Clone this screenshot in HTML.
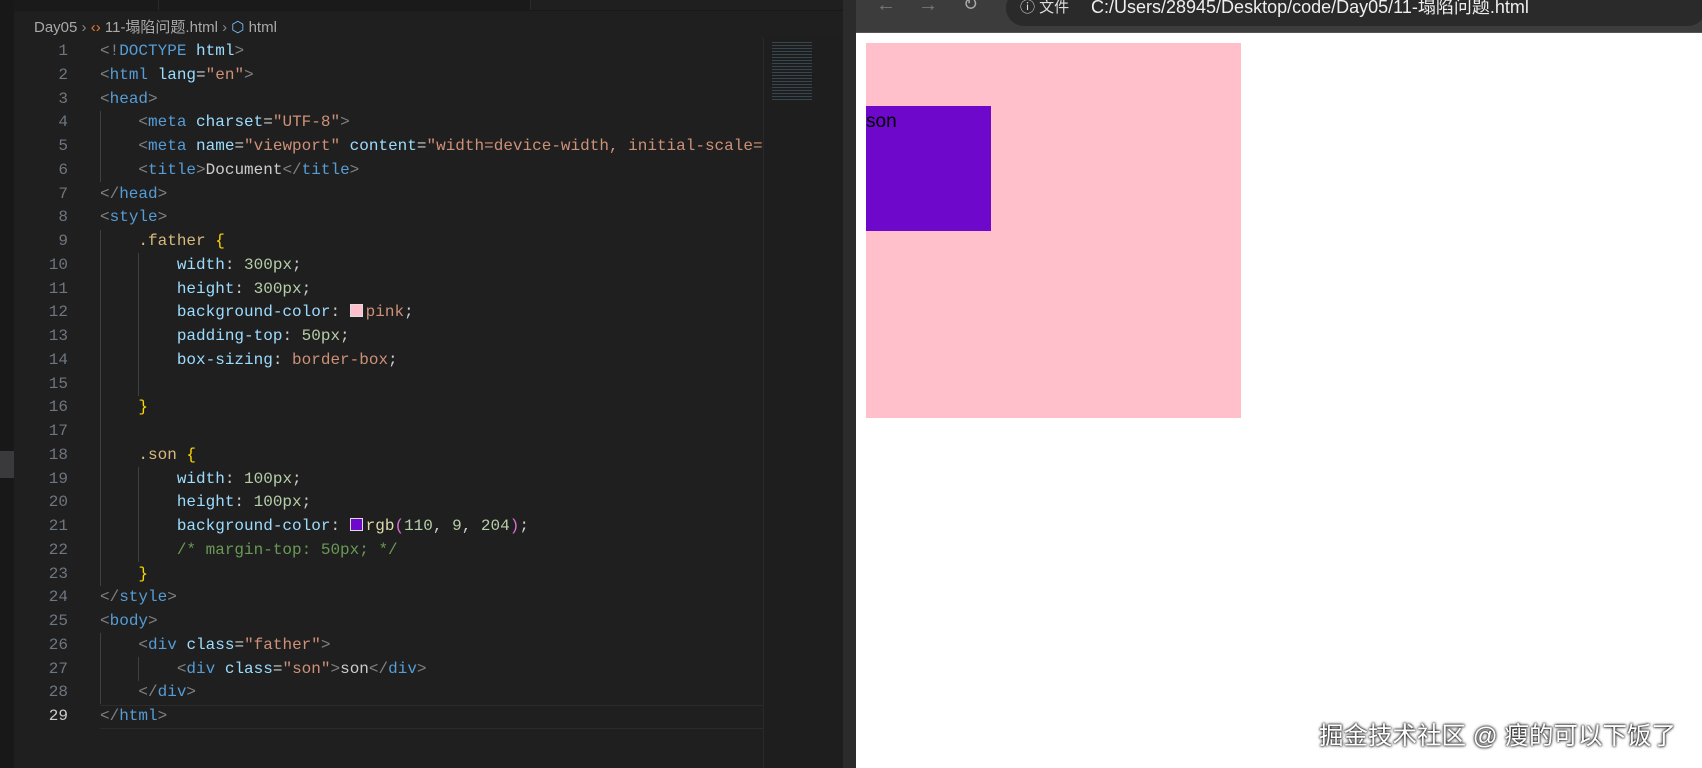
<!DOCTYPE html>
<html><head><meta charset="utf-8"><style>
*{margin:0;padding:0;box-sizing:border-box}
body{width:1702px;height:768px;overflow:hidden;background:#1f1f1f;position:relative;font-family:"Liberation Sans","Noto Sans CJK SC",sans-serif}
.ed{position:absolute;left:0;top:0;width:856px;height:768px;background:#1f1f1f}
.act{position:absolute;left:0;top:0;width:14px;height:768px;background:#181818}
.tabs{position:absolute;left:14px;top:0;width:842px;height:11px;background:#181818}
.tab{position:absolute;top:0;height:10px;background:#1a1a1a;border-right:1px solid #2a2a2a}
.bc{position:absolute;left:34px;top:16px;font-size:15px;color:#a9a9a9;white-space:nowrap}
.code{position:absolute;left:0;top:40px;font-family:"Liberation Mono",monospace;font-size:16px;line-height:23.75px;color:#cccccc;white-space:pre}
.ln{position:absolute;left:20px;width:48px;text-align:right;color:#6e7681}
.cl{position:absolute;left:100px}
.t{color:#808080}.n{color:#569cd6}.a{color:#9cdcfe}.s{color:#ce9178}.sel{color:#d7ba7d}.num{color:#b5cea8}.c{color:#6a9955}.b{color:#ffd700}.f{color:#dcdcaa}.p{color:#da70d6}
.sw{display:inline-block;width:13px;height:13px;border:1px solid #ddd;vertical-align:-1px;margin-right:3px}
.guide{position:absolute;width:1px;background:#404040}
.mini{position:absolute;left:763px;top:38px;width:80px;height:730px;background:#1e1e1e;border-left:1px solid #2a2a2a}
.sb{position:absolute;left:843px;top:0;width:13px;height:768px;background:#2b2b2b}
.br{position:absolute;left:856px;top:0;width:846px;height:768px;background:#fff}
.tb{position:absolute;left:0;top:0;width:846px;height:33px;background:#3c3c3c;border-bottom:1px solid #555}
.url{position:absolute;left:150px;top:-10px;height:36px;width:700px;background:#2a2a2a;border-radius:18px}
.father{position:absolute;left:10px;top:43px;width:375px;height:375px;background:pink}
.son{position:absolute;left:10px;top:106px;width:125px;height:125px;background:rgb(110,9,204);font-size:19px;color:#000;line-height:32px}
.wm{position:absolute;left:1319px;top:717px;font-size:24.5px;color:#fff;text-shadow:0 0 3px #000,0 0 2px #000;white-space:nowrap}
</style></head><body>
<div class="ed">
<div class="act"></div>
<div style="position:absolute;left:0;top:451px;width:14px;height:27px;background:#3a3a3d"></div>
<div class="tabs"><div class="tab" style="left:0;width:145px"></div><div class="tab" style="left:145px;width:372px"></div><div class="tab" style="left:517px;width:460px;background:#1f1f1f"></div></div>
<div class="bc">Day05 <span style="color:#888">›</span> <span style="color:#e37933">‹›</span> 11-塌陷问题.html <span style="color:#888">›</span> <span style="color:#75beff">⬡</span> html</div>
<div class="guide" style="left:100px;top:111px;height:71px"></div>
<div class="guide" style="left:100px;top:230px;height:356px"></div>
<div class="guide" style="left:138px;top:253px;height:143px"></div>
<div class="guide" style="left:138px;top:467px;height:95px"></div>
<div class="guide" style="left:100px;top:633px;height:71px"></div>
<div class="guide" style="left:138px;top:657px;height:24px"></div>
<div style="position:absolute;left:100px;top:705px;width:663px;height:24px;border-top:1px solid #2b2b2b;border-bottom:1px solid #2b2b2b"></div>
<div class="code">
<div class="ln" style="top:0">1</div><div class="cl" style="top:0"><span class="t">&lt;!</span><span class="n">DOCTYPE</span> <span class="a">html</span><span class="t">&gt;</span></div>
<div class="ln" style="top:23.75px">2</div><div class="cl" style="top:23.75px"><span class="t">&lt;</span><span class="n">html</span> <span class="a">lang</span>=<span class="s">"en"</span><span class="t">&gt;</span></div>
<div class="ln" style="top:47.5px">3</div><div class="cl" style="top:47.5px"><span class="t">&lt;</span><span class="n">head</span><span class="t">&gt;</span></div>
<div class="ln" style="top:71.25px">4</div><div class="cl" style="top:71.25px">    <span class="t">&lt;</span><span class="n">meta</span> <span class="a">charset</span>=<span class="s">"UTF-8"</span><span class="t">&gt;</span></div>
<div class="ln" style="top:95px">5</div><div class="cl" style="top:95px">    <span class="t">&lt;</span><span class="n">meta</span> <span class="a">name</span>=<span class="s">"viewport"</span> <span class="a">content</span>=<span class="s">"width=device-width, initial-scale=</span></div>
<div class="ln" style="top:118.75px">6</div><div class="cl" style="top:118.75px">    <span class="t">&lt;</span><span class="n">title</span><span class="t">&gt;</span>Document<span class="t">&lt;/</span><span class="n">title</span><span class="t">&gt;</span></div>
<div class="ln" style="top:142.5px">7</div><div class="cl" style="top:142.5px"><span class="t">&lt;/</span><span class="n">head</span><span class="t">&gt;</span></div>
<div class="ln" style="top:166.25px">8</div><div class="cl" style="top:166.25px"><span class="t">&lt;</span><span class="n">style</span><span class="t">&gt;</span></div>
<div class="ln" style="top:190px">9</div><div class="cl" style="top:190px">    <span class="sel">.father</span> <span class="b">{</span></div>
<div class="ln" style="top:213.75px">10</div><div class="cl" style="top:213.75px">        <span class="a">width</span>: <span class="num">300px</span>;</div>
<div class="ln" style="top:237.5px">11</div><div class="cl" style="top:237.5px">        <span class="a">height</span>: <span class="num">300px</span>;</div>
<div class="ln" style="top:261.25px">12</div><div class="cl" style="top:261.25px">        <span class="a">background-color</span>: <span class="sw" style="background:pink"></span><span class="s">pink</span>;</div>
<div class="ln" style="top:285px">13</div><div class="cl" style="top:285px">        <span class="a">padding-top</span>: <span class="num">50px</span>;</div>
<div class="ln" style="top:308.75px">14</div><div class="cl" style="top:308.75px">        <span class="a">box-sizing</span>: <span class="s">border-box</span>;</div>
<div class="ln" style="top:332.5px">15</div>
<div class="ln" style="top:356.25px">16</div><div class="cl" style="top:356.25px">    <span class="b">}</span></div>
<div class="ln" style="top:380px">17</div>
<div class="ln" style="top:403.75px">18</div><div class="cl" style="top:403.75px">    <span class="sel">.son</span> <span class="b">{</span></div>
<div class="ln" style="top:427.5px">19</div><div class="cl" style="top:427.5px">        <span class="a">width</span>: <span class="num">100px</span>;</div>
<div class="ln" style="top:451.25px">20</div><div class="cl" style="top:451.25px">        <span class="a">height</span>: <span class="num">100px</span>;</div>
<div class="ln" style="top:475px">21</div><div class="cl" style="top:475px">        <span class="a">background-color</span>: <span class="sw" style="background:rgb(110,9,204)"></span><span class="f">rgb</span><span class="p">(</span><span class="num">110</span>, <span class="num">9</span>, <span class="num">204</span><span class="p">)</span>;</div>
<div class="ln" style="top:498.75px">22</div><div class="cl" style="top:498.75px">        <span class="c">/* margin-top: 50px; */</span></div>
<div class="ln" style="top:522.5px">23</div><div class="cl" style="top:522.5px">    <span class="b">}</span></div>
<div class="ln" style="top:546.25px">24</div><div class="cl" style="top:546.25px"><span class="t">&lt;/</span><span class="n">style</span><span class="t">&gt;</span></div>
<div class="ln" style="top:570px">25</div><div class="cl" style="top:570px"><span class="t">&lt;</span><span class="n">body</span><span class="t">&gt;</span></div>
<div class="ln" style="top:593.75px">26</div><div class="cl" style="top:593.75px">    <span class="t">&lt;</span><span class="n">div</span> <span class="a">class</span>=<span class="s">"father"</span><span class="t">&gt;</span></div>
<div class="ln" style="top:617.5px">27</div><div class="cl" style="top:617.5px">        <span class="t">&lt;</span><span class="n">div</span> <span class="a">class</span>=<span class="s">"son"</span><span class="t">&gt;</span>son<span class="t">&lt;/</span><span class="n">div</span><span class="t">&gt;</span></div>
<div class="ln" style="top:641.25px">28</div><div class="cl" style="top:641.25px">    <span class="t">&lt;/</span><span class="n">div</span><span class="t">&gt;</span></div>
<div class="ln" style="top:665px;color:#ccc">29</div><div class="cl" style="top:665px"><span class="t">&lt;/</span><span class="n">html</span><span class="t">&gt;</span></div>
</div>
<div class="mini"><div style="margin:4px 8px;width:40px;height:60px;background:repeating-linear-gradient(#4a6070 0 1px,transparent 1px 3px);opacity:.6"></div></div>
<div class="sb"></div>
</div>
<div class="br">
<div class="tb"><div class="url"></div>
<span style="position:absolute;left:20px;top:-6px;color:#777;font-size:20px">←</span>
<span style="position:absolute;left:62px;top:-6px;color:#777;font-size:20px">→</span>
<span style="position:absolute;left:107px;top:-6px;color:#aaa;font-size:18px">↻</span>
<span style="position:absolute;left:164px;top:-4px;color:#ddd;font-size:15px">ⓘ 文件</span>
<span style="position:absolute;left:235px;top:-7px;color:#eee;font-size:18px;white-space:nowrap">C:/Users/28945/Desktop/code/Day05/11-塌陷问题.html</span>
</div>
<div class="father"></div>
<div class="son">son</div>
</div>
<div class="wm">掘金技术社区 @ 瘦的可以下饭了</div>
</body></html>
